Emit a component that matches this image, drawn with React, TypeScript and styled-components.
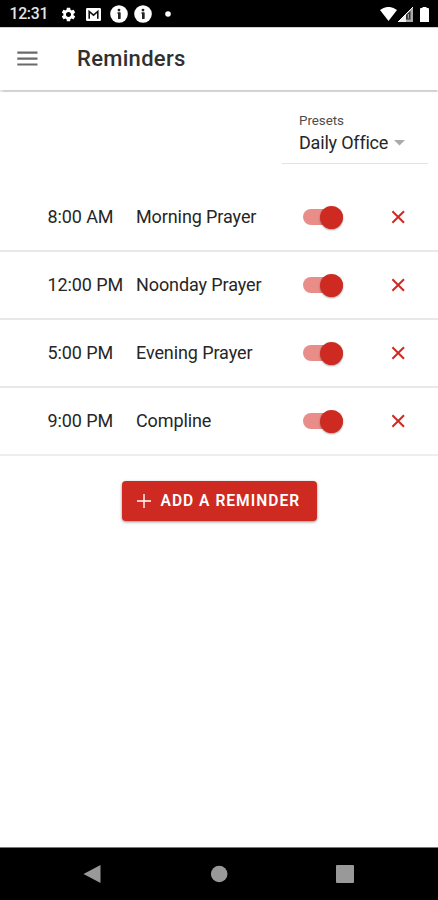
import React, { useState } from "react";
import styled, { createGlobalStyle } from "styled-components";
import { MdSettings } from "react-icons/md";

const GlobalStyle = createGlobalStyle`
  *, *::before, *::after { box-sizing: border-box; }
  body { margin: 0; background: #fff; font-family: Roboto, "Liberation Sans", sans-serif; }
  button { font-family: inherit; border: 0; padding: 0; background: none; cursor: pointer; }
  svg { display: block; flex: none; }
`;

const Screen = styled.div`
  display: flex;
  flex-direction: column;
  width: 438px;
  height: 900px;
  overflow: hidden;
  background: #fff;
  color: #262626;
`;

const StatusBar = styled.div`
  flex: none;
  display: flex;
  align-items: center;
  justify-content: space-between;
  height: 27px;
  padding: 1px 3px 0 9.5px;
  background: #000;
  color: #fff;
`;

const StatusGroup = styled.div`
  display: flex;
  align-items: center;
`;

const Clock = styled.span`
  width: 51px;
  font-size: 15.8px;
  font-weight: 500;
  line-height: 20px;
  letter-spacing: -0.3px;
  color: #e4e4e4;
`;

const StatusIcon = styled.span<{ $width: number }>`
  flex: none;
  display: flex;
  justify-content: center;
  width: ${(p) => p.$width}px;
`;

const Header = styled.header`
  flex: none;
  display: flex;
  align-items: center;
  height: 63px;
  padding: 0 0 1px 17px;
  border-top: 1px solid #cfcfcf;
  background: #fff;
  box-shadow: 0 1.5px 1px rgba(0, 0, 0, 0.13), 0 1px 3px rgba(0, 0, 0, 0.1);
`;

const MenuButton = styled.button`
  width: 60px;
`;

const Title = styled.h1`
  margin: 0;
  font-size: 22px;
  font-weight: 500;
  line-height: 30px;
  letter-spacing: 0.3px;
  color: #303030;
`;

const Content = styled.main`
  flex: 1;
  display: flex;
  flex-direction: column;
  align-items: center;
`;

const PresetField = styled.div`
  align-self: flex-end;
  width: 146px;
  height: 60px;
  margin: 14px 10.5px 20px 0;
  padding: 8px 0 0 17.5px;
  border-bottom: 1.5px solid #e2e2e2;
`;

const PresetLabel = styled.div`
  font-size: 13.4px;
  line-height: 17px;
  letter-spacing: -0.05px;
  color: #4c4c4c;
`;

const PresetValue = styled.div`
  display: flex;
  align-items: center;
  gap: 6px;
  margin-top: 2px;
  font-size: 18px;
  line-height: 24px;
  letter-spacing: -0.2px;
  white-space: nowrap;
`;

const List = styled.div`
  width: 100%;
`;

const Row = styled.div`
  display: grid;
  grid-template-columns: 88.5px 166.5px 85.5px 24px;
  align-items: center;
  height: 68px;
  padding-left: 47.5px;
  border-bottom: 2px solid #e8e8e8;

  &:last-child {
    border-bottom-color: #eeeeee;
  }
`;

const Cell = styled.span`
  font-size: 18px;
  line-height: 24px;
  letter-spacing: -0.1px;
  white-space: nowrap;
`;

const Track = styled.button`
  display: flex;
  align-items: center;
  justify-content: flex-end;
  width: 40.5px;
  height: 16px;
  border-radius: 8px;
  background: linear-gradient(90deg, #e88d88 60%, #bd706b);
`;

const Thumb = styled.span`
  flex: none;
  width: 23px;
  height: 23px;
  border-radius: 50%;
  background: #cf2a21;
  box-shadow: 0 1px 2px rgba(0, 0, 0, 0.35);
`;

const RemoveButton = styled.button`
  display: flex;
`;

const AddButton = styled.button`
  display: flex;
  align-items: center;
  width: 195px;
  height: 40px;
  margin-top: 25px;
  padding: 0 0 1px 15px;
  gap: 10px;
  border-radius: 4px;
  background: #cf2a21;
  box-shadow: 0 1px 3px rgba(0, 0, 0, 0.45);
  color: #fff;
  font-size: 15.6px;
  font-weight: 600;
  letter-spacing: 1px;
  white-space: nowrap;
`;

const NavBar = styled.nav`
  flex: none;
  display: flex;
  justify-content: space-between;
  align-items: center;
  height: 53px;
  padding: 0 84px 0 83px;
  border-top: 1px solid #777;
  background: #000;
`;

const reminders = [
  { time: "8:00 AM", name: "Morning Prayer" },
  { time: "12:00 PM", name: "Noonday Prayer" },
  { time: "5:00 PM", name: "Evening Prayer" },
  { time: "9:00 PM", name: "Compline" },
];

const MailIcon = () => (
  <svg width="15" height="13" viewBox="0 0 15 13">
    <rect width="15" height="13" rx="1.2" fill="#fff" />
    <path d="M3.2 10.8V3.5L7.5 7.2L11.8 3.5V10.8" fill="none" stroke="#111" strokeWidth="1.6" />
  </svg>
);

const InfoIcon = () => (
  <svg width="18" height="18" viewBox="0 0 18 18">
    <circle cx="9" cy="9" r="8.8" fill="#fff" />
    <circle cx="9" cy="5.1" r="1.4" fill="#222" />
    <path d="M7.2 8H10V13.8" fill="none" stroke="#222" strokeWidth="1.2" />
    <path d="M9.1 7.5V14" stroke="#222" strokeWidth="2.2" />
  </svg>
);

const WifiIcon = () => (
  <svg width="17" height="14" viewBox="0 0 17 14">
    <path d="M0 3Q8.5-3.2 17 3L8.5 14Z" fill="#fff" />
  </svg>
);

const SignalIcon = () => (
  <svg width="15" height="15" viewBox="0 0 15 15">
    <path d="M0 15L15 0V15Z" fill="#aaa" />
    <path d="M0 15L8 7V15Z" fill="#eee" />
    <path d="M0 15L15 0" stroke="#fff" strokeWidth="1" />
    <path d="M8 8L12.5 4V12.5H8Z" fill="#333" />
    <path d="M10.4 7V11.5" stroke="#999" strokeWidth="1.2" />
  </svg>
);

const BatteryIcon = () => (
  <svg width="9" height="15" viewBox="0 0 9 15">
    <path d="M2.5 1V0H6.5V1H8Q9 1 9 2V15H0V2Q0 1 1 1Z" fill="#fff" />
  </svg>
);

const Reminder = ({ time, name, onRemove }: { time: string; name: string; onRemove: () => void }) => (
  <Row>
    <Cell>{time}</Cell>
    <Cell>{name}</Cell>
    <Track role="switch" aria-checked="true" aria-label={name}>
      <Thumb />
    </Track>
    <RemoveButton aria-label={`Remove ${name}`} onClick={onRemove}>
      <svg width="20" height="20" viewBox="0 0 20 20">
        <path d="M4.4 4.2L16 15.8M16 4.2L4.4 15.8" stroke="#cf2a21" strokeWidth="2" />
      </svg>
    </RemoveButton>
  </Row>
);

export default function App() {
  const [items, setItems] = useState(reminders);
  return (
    <>
      <GlobalStyle />
      <Screen>
        <StatusBar>
          <StatusGroup>
            <Clock>12:31</Clock>
            <StatusIcon $width={16}><MdSettings size={17} /></StatusIcon>
            <StatusIcon $width={34}><MailIcon /></StatusIcon>
            <StatusIcon $width={16}><InfoIcon /></StatusIcon>
            <StatusIcon $width={33}><InfoIcon /></StatusIcon>
            <StatusIcon $width={16}>
              <svg width="6" height="6" viewBox="0 0 6 6"><circle cx="3" cy="3" r="2.8" fill="#fff" /></svg>
            </StatusIcon>
          </StatusGroup>
          <StatusGroup>
            <StatusIcon $width={17}><WifiIcon /></StatusIcon>
            <StatusIcon $width={17}><SignalIcon /></StatusIcon>
            <StatusIcon $width={21}><BatteryIcon /></StatusIcon>
          </StatusGroup>
        </StatusBar>
        <Header>
          <MenuButton aria-label="Menu">
            <svg width="21" height="16" viewBox="0 0 21 16">
              <path d="M0.3 1.7H20.5M0.3 7.6H20.5M0.3 13.5H20.5" stroke="#6a6a6a" strokeWidth="2.2" />
            </svg>
          </MenuButton>
          <Title>Reminders</Title>
        </Header>
        <Content>
          <PresetField>
            <PresetLabel>Presets</PresetLabel>
            <PresetValue>
              Daily Office
              <svg width="11" height="6" viewBox="0 0 11 6"><path d="M0 0H11L5.5 5.5Z" fill="#aaa" /></svg>
            </PresetValue>
          </PresetField>
          <List>
            {items.map((item) => (
              <Reminder
                key={item.name}
                {...item}
                onRemove={() => setItems(items.filter((other) => other.name !== item.name))}
              />
            ))}
          </List>
          <AddButton>
            <svg width="14" height="14" viewBox="0 0 14 14">
              <path d="M7 0V14M0 7H14" stroke="#fff" strokeWidth="1.4" />
            </svg>
            ADD A REMINDER
          </AddButton>
        </Content>
        <NavBar>
          <svg width="18" height="20" viewBox="0 0 18 20"><path d="M0.5 10L17.5 1V19Z" fill="#999" /></svg>
          <svg width="19" height="18" viewBox="0 0 19 18"><circle cx="10.2" cy="9" r="8.3" fill="#999" /></svg>
          <svg width="18" height="18" viewBox="0 0 18 18"><rect width="18" height="18" rx="1" fill="#999" /></svg>
        </NavBar>
      </Screen>
    </>
  );
}
